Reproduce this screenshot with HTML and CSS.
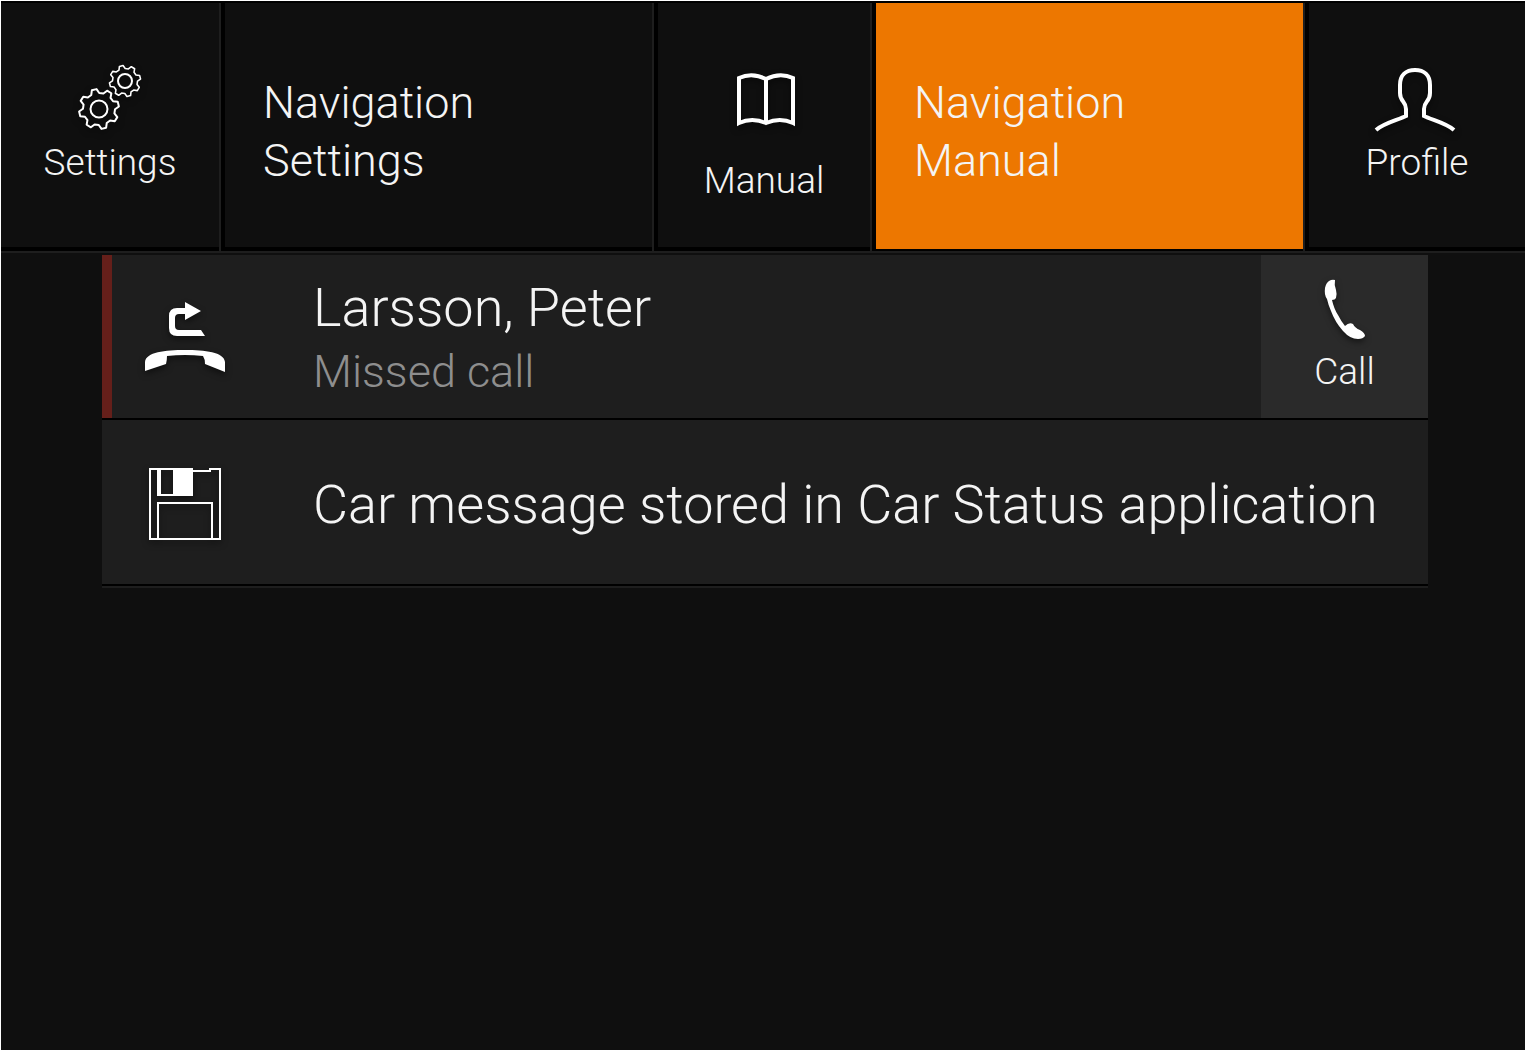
FILE: index.html
```html
<!DOCTYPE html>
<html lang="en">
<head>
    <meta charset="UTF-8">
    <meta name="viewport" content="width=device-width, initial-scale=1.0">
    <title>Car Notifications</title>
    <link rel="stylesheet" href="styles.css">
</head>
<body>

    <nav class="tabs">
        <div class="tab">
            <a href="#" class="tab-link icon-link">
                <svg class="icon" width="80" height="72" viewBox="0 0 80 72">
                    <defs>
                        <path id="gear" d="M15.5-4.1L19.9-2.4V2.4L15.5 4.1L13.9 8L15.8 12.3L12.3 15.8L8 13.9L4.1 15.5L2.4 19.9H-2.4L-4.1 15.5L-8 13.9L-12.3 15.8L-15.8 12.3L-13.9 8L-15.5 4.1L-19.9 2.4V-2.4L-15.5-4.1L-13.9-8L-15.8-12.3L-12.3-15.8L-8-13.9L-4.1-15.5L-2.4-19.9H2.4L4.1-15.5L8-13.9L12.3-15.8L15.8-12.3L13.9-8Z"/>
                    </defs>
                    <g fill="none" stroke="#fff" stroke-width="2" stroke-linejoin="round">
                        <use href="#gear" transform="translate(29 49) rotate(-14)"/>
                        <circle cx="29" cy="49" r="8.5"/>
                        <use href="#gear" transform="translate(55 21) rotate(-14) scale(.78)"/>
                        <circle cx="55" cy="21" r="7"/>
                    </g>
                </svg>
                <span>Settings</span>
            </a>
        </div>
        <div class="tab">
            <a href="#" class="tab-link title-link">Navigation<br>Settings</a>
        </div>
        <div class="tab">
            <a href="#" class="tab-link icon-link spaced">
                <svg class="icon" width="80" height="72" viewBox="0 0 80 72">
                    <path d="M15 63V18Q28 12 42 19Q56 12 69 18V63Q56 57 42 63Q28 57 15 63ZM42 19V63" fill="none" stroke="#fff" stroke-width="4"/>
                </svg>
                <span>Manual</span>
            </a>
        </div>
        <div class="tab">
            <a href="#" class="tab-link title-link active">Navigation<br>Manual</a>
        </div>
        <div class="tab">
            <a href="#" class="tab-link icon-link">
                <svg class="icon" width="80" height="72" viewBox="0 0 80 72">
                    <path d="M-1 70C7 63 21 60 29 56V49C29 41 23 42 23 33V25C23 15 29 10 38 10S53 15 53 25V33C53 42 47 41 47 49V56C55 60 69 63 77 70" fill="none" stroke="#fff" stroke-width="4"/>
                </svg>
                <span>Profile</span>
            </a>
        </div>
    </nav>

    <main class="messages">
        <div class="message missed">
            <div class="message-icon">
                <svg class="icon" width="80" height="72" viewBox="0 0 80 72">
                    <path d="M0 69V60C1 50 20 48 40 48S79 50 80 60V70L60 62Q60 57 58 54Q40 52 22 54Q22 58 21 62Z" fill="#fff"/>
                    <path d="M24 14Q24 6 32 6H40V0L56 9L40 18V12H34Q30 12 30 16V24Q30 28 34 28H56Q58 31 60 34H32Q24 34 24 26Z" fill="#fff"/>
                </svg>
            </div>
            <div class="message-text">
                <h2>Larsson, Peter</h2>
                <p>Missed call</p>
            </div>
            <button type="button" class="call-button">
                <svg class="icon" width="42" height="62" viewBox="0 0 42 62">
                    <path d="M5 2Q8 0 11 1Q10 6 12 11Q13 14 12 19Q11 21 8 21Q10 30 14 36Q17 42 21 47Q25 43 29 45Q31 49 36 51Q41 54 41 57Q39 60 34 60Q26 60 19 52Q11 43 7 32Q4 25 3 20Q0 16 1 9Q2 4 5 2Z" fill="#fff"/>
                </svg>
                <span>Call</span>
            </button>
        </div>
        <div class="message">
            <div class="message-icon">
                <svg class="icon" width="72" height="72" viewBox="0 0 72 72">
                    <path d="M8 0H44V28H8ZM12 2V26H24V2Z" fill="#fff" fill-rule="evenodd"/>
                    <path d="M8 1H1V71H71V1H61V3H44M9 71V35H63V71" fill="none" stroke="#fff" stroke-width="2"/>
                </svg>
            </div>
            <div class="message-text">
                <h2>Car message stored in Car Status application</h2>
            </div>
        </div>
    </main>

</body>
</html>
```
FILE: styles.css
```css
* {
    box-sizing: border-box;
}

body {
    margin: 0;
    min-height: 100vh;
    border-top: 1px solid #fff;
    border-left: 1px solid #fff;
    background-color: #0f0f0f;
    color: #f4f4f4;
    font-family: Roboto, 'Liberation Sans', sans-serif;
    font-weight: 300;
}

.icon {
    display: block;
    overflow: visible;
    filter: drop-shadow(0 3px 3px rgba(0,0,0,0.5));
}

/* Top tabs */
.tabs {
    display: grid;
    grid-template-columns: 220px 1fr 218px 1fr 220px;
    border-top: 2px solid #000;
    border-bottom: 2px solid #1e1e1e;
}

.tab {
    height: 248px;
    border-right: 2px solid #1e1e1e;
}
.tab:last-child {
    border-right: none;
}

.tab-link {
    display: flex;
    height: 100%;
    border-left: 4px solid #000;
    border-bottom: 4px solid #000;
    color: #f4f4f4;
    text-decoration: none;
}
.tab:first-child .tab-link {
    border-left: none;
}
.tab-link.active {
    background-color: #ed7700;
    border-bottom-width: 2px;
}

.icon-link {
    flex-direction: column;
    align-items: center;
    gap: 9px;
    padding-top: 57px;
    font-size: 37px;
    line-height: 44px;
}
.icon-link.spaced {
    gap: 27px;
}

.title-link {
    padding: 71px 38px 0;
    font-size: 45px;
    line-height: 58px;
}

/* Message list */
.messages {
    margin: 2px 97px 0 101px;
    border-bottom: 2px solid #1e1e1e;
}

.message {
    display: flex;
    height: 166px;
    background-color: #1e1e1e;
    border-bottom: 2px solid #000;
}
.message.missed {
    height: 165px;
}

.message.missed::before {
    content: '';
    width: 10px;
    background-color: #651f1a;
}

.message-icon {
    display: flex;
    align-items: center;
    justify-content: center;
    width: 166px;
    padding-top: 4px;
    margin-right: 45px;
}
.missed .message-icon {
    width: 146px;
    padding-top: 2px;
    margin-right: 55px;
}

.message-text {
    flex: 1;
    align-self: center;
    padding-top: 6px;
}
.message-text h2 {
    margin: 0;
    font-size: 54px;
    font-weight: 300;
    line-height: 64px;
    white-space: nowrap;
}
.message-text p {
    margin: 0;
    color: #8e8e8e;
    font-size: 45px;
    line-height: 64px;
}

.call-button {
    display: flex;
    flex-direction: column;
    align-items: center;
    justify-content: center;
    gap: 9px;
    width: 167px;
    padding: 0;
    border: none;
    background-color: #2a2a2a;
    color: #f4f4f4;
    font-family: inherit;
    font-size: 37px;
    font-weight: 300;
    line-height: 44px;
    cursor: pointer;
}
```
